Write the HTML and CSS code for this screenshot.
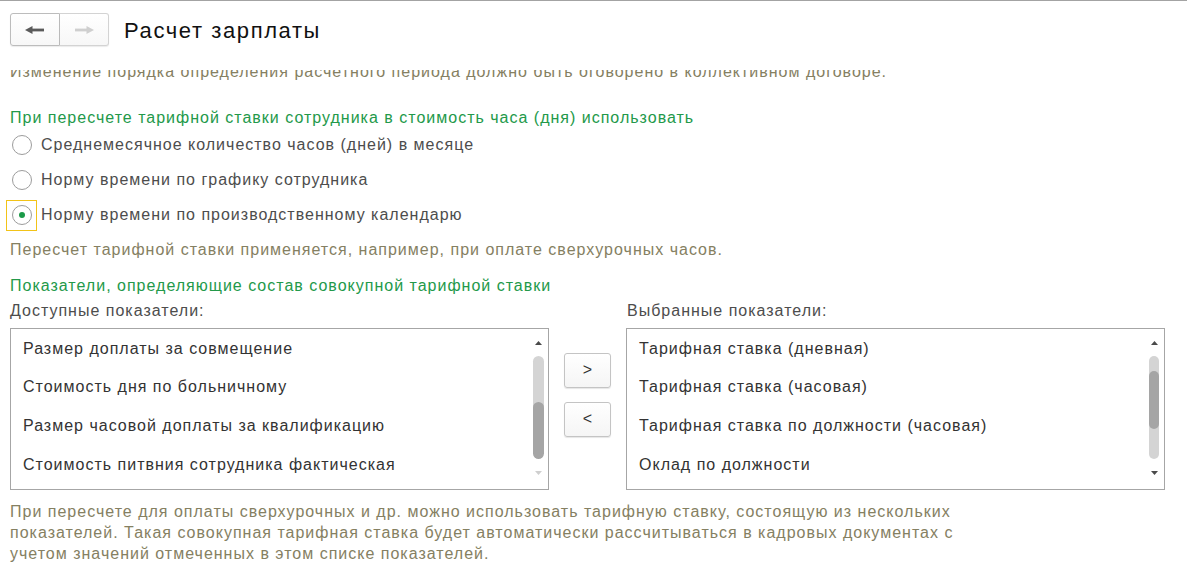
FILE: index.html
```html
<!DOCTYPE html>
<html lang="ru">
<head>
<meta charset="utf-8">
<title>Расчет зарплаты</title>
<link rel="stylesheet" href="styles.css">
</head>
<body>
<div class="page">
  <header class="header">
    <div class="nav">
      <button class="nav-btn nav-back" type="button" aria-label="Назад">
        <svg width="20" height="8" viewBox="0 0 20 8"><polygon points="0,4 7.5,0 7.5,8" fill="#5a5a5a"/><rect x="6" y="2.6" width="13" height="2.8" fill="#5a5a5a"/></svg>
      </button>
      <button class="nav-btn nav-fwd" type="button" aria-label="Вперед">
        <svg width="20" height="8" viewBox="0 0 20 8"><polygon points="20,4 12.5,0 12.5,8" fill="#cfcfcf"/><rect x="1" y="2.6" width="13" height="2.8" fill="#cfcfcf"/></svg>
      </button>
    </div>
    <h1 class="title">Расчет зарплаты</h1>
  </header>

  <main class="content">
    <p class="hint clipped">Изменение порядка определения расчетного периода должно быть оговорено в коллективном договоре.</p>

    <h2 class="group-title first">При пересчете тарифной ставки сотрудника в стоимость часа (дня) использовать</h2>
    <div class="radios">
      <label class="radio-row">
        <span class="radio-cell"><span class="radio"></span></span>
        <span class="radio-text">Среднемесячное количество часов (дней) в месяце</span>
      </label>
      <label class="radio-row">
        <span class="radio-cell"><span class="radio"></span></span>
        <span class="radio-text">Норму времени по графику сотрудника</span>
      </label>
      <label class="radio-row">
        <span class="radio-cell focused"><span class="radio checked"></span></span>
        <span class="radio-text">Норму времени по производственному календарю</span>
      </label>
    </div>
    <p class="hint after-radios">Пересчет тарифной ставки применяется, например, при оплате сверхурочных часов.</p>

    <h2 class="group-title second">Показатели, определяющие состав совокупной тарифной ставки</h2>

    <div class="lists-labels">
      <div class="list-label">Доступные показатели:</div>
      <div class="list-label right">Выбранные показатели:</div>
    </div>

    <div class="lists">
      <div class="listbox">
        <ul class="items">
          <li>Размер доплаты за совмещение</li>
          <li>Стоимость дня по больничному</li>
          <li>Размер часовой доплаты за квалификацию</li>
          <li>Стоимость питвния сотрудника фактическая</li>
        </ul>
        <div class="scrollbar">
          <svg class="arrow" width="7" height="4" viewBox="0 0 7 4"><polygon points="3.5,0 7,4 0,4" fill="#4a4a4a"/></svg>
          <div class="track"><div class="thumb" style="margin-top:46px;height:57px"></div></div>
          <svg class="arrow" width="7" height="4" viewBox="0 0 7 4"><polygon points="0,0 7,0 3.5,4" fill="#cfcfcf"/></svg>
        </div>
      </div>

      <div class="move-buttons">
        <button class="move-btn" type="button">&gt;</button>
        <button class="move-btn" type="button">&lt;</button>
      </div>

      <div class="listbox">
        <ul class="items">
          <li>Тарифная ставка (дневная)</li>
          <li>Тарифная ставка (часовая)</li>
          <li>Тарифная ставка по должности (часовая)</li>
          <li>Оклад по должности</li>
        </ul>
        <div class="scrollbar narrow">
          <svg class="arrow" width="7" height="4" viewBox="0 0 7 4"><polygon points="3.5,0 7,4 0,4" fill="#4a4a4a"/></svg>
          <div class="track"><div class="thumb" style="margin-top:15px;height:58px"></div></div>
          <svg class="arrow" width="7" height="4" viewBox="0 0 7 4"><polygon points="0,0 7,0 3.5,4" fill="#4a4a4a"/></svg>
        </div>
      </div>
    </div>

    <p class="hint bottom">При пересчете для оплаты сверхурочных и др. можно использовать тарифную ставку, состоящую из нескольких показателей. Такая совокупная тарифная ставка будет автоматически рассчитываться в кадровых документах с учетом значений отмеченных в этом списке показателей.</p>
  </main>
</div>
</body>
</html>
```

FILE: styles.css
```css
* { box-sizing: border-box; }

html, body {
  margin: 0;
  padding: 0;
  background: #ffffff;
}

body {
  font-family: "Liberation Sans", Arial, sans-serif;
  font-size: 16px;
  letter-spacing: 1px;
  color: #4d4d4d;
  overflow: hidden;
}

.page {
  width: 1187px;
  height: 565px;
  border-top: 1px solid #a3a3a3;
  display: flex;
  flex-direction: column;
  overflow: hidden;
}

/* Header */
.header {
  height: 69px;
  flex: none;
  display: flex;
  align-items: flex-start;
  padding: 12px 0 0 10px;
  background: #fff;
  position: relative;
  z-index: 1;
}

.nav {
  display: flex;
  height: 33px;
}

.nav-btn {
  width: 50px;
  height: 33px;
  margin: 0;
  padding: 0;
  display: flex;
  align-items: center;
  justify-content: center;
  background: linear-gradient(#ffffff, #f7f7f7);
  border: 1px solid #d3d3d3;
  box-shadow: 0 1px 1px rgba(0, 0, 0, 0.08);
}

.nav-back {
  border-color: #bcbcbc;
  border-radius: 3px 0 0 3px;
}

.nav-fwd {
  border-left: none;
  border-radius: 0 3px 3px 0;
  width: 49px;
}

.title {
  margin: 0 0 0 15px;
  font-size: 22px;
  letter-spacing: 1.6px;
  font-weight: normal;
  color: #111;
  line-height: 33px;
  height: 33px;
  padding-top: 1px;
}

/* Content */
.content {
  flex: 1;
  overflow: hidden;
  padding-left: 10px;
}

p { margin: 0; }

.hint {
  color: #858062;
  line-height: 20px;
}

.clipped {
  margin-top: -8.5px;
  white-space: nowrap;
}

.group-title {
  margin: 0;
  font-size: 16px;
  font-weight: normal;
  color: #23994a;
  line-height: 20px;
}

.group-title.first { margin-top: 26px; }
.group-title.second { margin-top: 16px; }

.radios {
  display: flex;
  flex-direction: column;
}

.radio-row {
  height: 35px;
  display: flex;
  align-items: center;
}

.radio-cell {
  width: 31px;
  height: 31px;
  margin-left: -4px;
  border: 1px solid transparent;
  display: flex;
  align-items: center;
  justify-content: center;
}

.radio-cell.focused {
  border-color: #f2c318;
}

.radio {
  width: 20px;
  height: 20px;
  border-radius: 50%;
  border: 1px solid #9c9c9c;
  background: #fff;
  display: flex;
  align-items: center;
  justify-content: center;
}

.radio.checked::after {
  content: "";
  width: 6px;
  height: 6px;
  border-radius: 50%;
  background: #1b9a48;
}

.radio-text {
  margin-left: 4px;
  line-height: 20px;
}

.after-radios { margin-top: 7px; }

.lists-labels {
  display: flex;
  margin-top: 5px;
  line-height: 20px;
}

.list-label { width: 616px; }
.list-label.right { width: auto; padding-left: 1px; }

.lists {
  display: flex;
  margin-top: 7px;
}

.listbox {
  width: 539px;
  height: 162px;
  border: 1px solid #a6a6a6;
  display: flex;
  background: #fff;
}

.items {
  list-style: none;
  margin: 0;
  padding: 0 0 0 12px;
  flex: 1;
  color: #333;
}

.items li {
  height: 38.7px;
  line-height: 38.7px;
  padding-top: 1px;
  white-space: nowrap;
}

.scrollbar {
  width: 11px;
  margin-right: 4px;
  display: flex;
  flex-direction: column;
  align-items: center;
  padding-top: 12px;
}

.scrollbar.narrow {
  width: 10px;
  margin-right: 5px;
}

.arrow { flex: none; display: block; }

.track {
  width: 100%;
  height: 103px;
  margin: 11px 0 12px;
  background: #d4d4d4;
  border-radius: 6px;
  overflow: hidden;
}

.thumb {
  width: 100%;
  background: #a5a5a5;
  border-radius: 6px;
}

.move-buttons {
  width: 77px;
  display: flex;
  flex-direction: column;
  align-items: center;
  gap: 14px;
  padding-top: 25px;
}

.move-btn {
  width: 47px;
  height: 35px;
  margin: 0;
  padding: 0;
  font-family: "Liberation Sans", Arial, sans-serif;
  font-size: 16px;
  color: #333;
  background: linear-gradient(#ffffff, #f5f5f5);
  border: 1px solid #c4c4c4;
  border-radius: 3px;
  box-shadow: 0 1px 1px rgba(0, 0, 0, 0.1);
}

.bottom {
  margin-top: 11px;
  width: 965px;
  line-height: 21.3px;
}
```
